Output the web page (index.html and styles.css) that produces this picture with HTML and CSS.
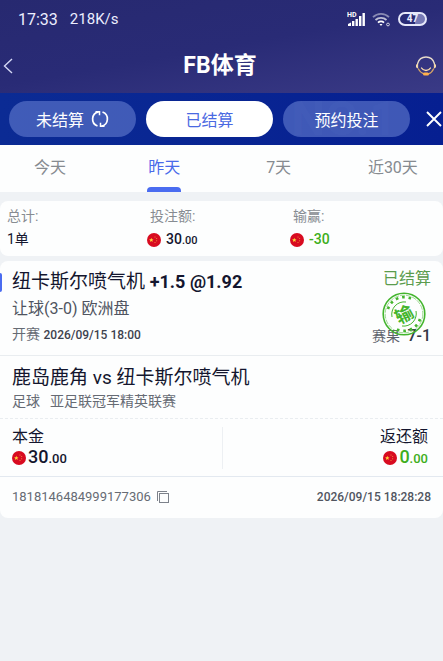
FILE: index.html
```html
<!DOCTYPE html>
<html lang="zh-CN">
<head>
    <meta charset="UTF-8">
    <meta name="viewport" content="width=device-width, initial-scale=1">
    <title>FB体育</title>
    <link rel="stylesheet" href="styles.css">
</head>
<body>
    <svg class="sprite" aria-hidden="true">
        <symbol id="flag" viewBox="0 0 14 14">
            <circle cx="7" cy="7" r="7" fill="#d80b20"/>
            <path d="M4.3 4.8l.6 1.5 1.6.1-1.2 1 .4 1.6-1.4-.9-1.4.9.4-1.6-1.2-1 1.6-.1z" fill="#ffd43b"/>
            <g fill="#f5a742">
                <circle cx="8" cy="3.9" r=".5"/>
                <circle cx="9.7" cy="5.5" r=".5"/>
                <circle cx="9.7" cy="7.8" r=".5"/>
                <circle cx="8" cy="9.6" r=".5"/>
            </g>
        </symbol>
    </svg>

    <header class="top">
        <div class="status">
            <span>17:33</span>
            <span class="speed">218K/s</span>
            <svg class="signal" width="20" height="16" viewBox="0 0 20 16">
                <text x="0" y="6" class="hd">HD</text>
                <g fill="#fff">
                    <path d="M1 15v-2l3-1.5V15z"/>
                    <rect x="5" y="10" width="2.4" height="5"/>
                    <rect x="8.5" y="8" width="2.4" height="7"/>
                    <rect x="12" y="5" width="2.4" height="10"/>
                    <rect x="15.5" y="2" width="2.4" height="13"/>
                </g>
            </svg>
            <svg class="wifi" width="19" height="15" viewBox="0 0 19 15" fill="none" stroke="#fff" stroke-width="1.8">
                <path d="M1 5.2a11.4 11.4 0 0 1 16 0" opacity=".45"/>
                <path d="M3.5 8a8 8 0 0 1 11 0" opacity=".7"/>
                <path d="M6 10.6a4.4 4.4 0 0 1 6 0"/>
                <path d="M7.5 12l1.5 2 1.5-2z" fill="#fff" stroke="none"/>
                <circle cx="16" cy="12.5" r="1.4" stroke-width="1" opacity=".75"/>
            </svg>
            <span class="battery">47</span>
        </div>
        <div class="title-bar">
            <button class="icon-btn" aria-label="返回">
                <svg width="10" height="16" viewBox="0 0 10 16" fill="none" stroke="#d5d8f5" stroke-width="1.4"><path d="M9 1L1.5 8 9 15"/></svg>
            </button>
            <h1>FB体育</h1>
            <button class="icon-btn" aria-label="客服">
                <svg width="22" height="20" viewBox="0 0 22 20" fill="none" stroke-linecap="round">
                    <path d="M2.6 7.5C3.7 3.6 7 1 11 1s7.3 2.6 8.4 6.5" stroke="#e8dccb" stroke-width="1.3"/>
                    <path d="M2.3 8c-1.2.8-1.2 3.2 0 4zM19.7 8c1.2.8 1.2 3.2 0 4z" fill="#ffe3ae" stroke="#ffe3ae"/>
                    <path d="M3.5 13c1.3 2.7 3.6 4.5 6.5 5M18.5 13c-1 2.4-2.5 4-5 4.8" stroke="#d5a366" stroke-width="1.3"/>
                    <path d="M6.5 12c2 3.3 7 3.3 9 0" stroke="#ffe0ad" stroke-width="1.3"/>
                    <path d="M9.5 18h3" stroke="#ffb04c" stroke-width="3"/>
                </svg>
            </button>
        </div>
    </header>

    <nav class="filters">
        <span class="watermark" aria-hidden="true">NO.1</span>
        <button class="pill">未结算
            <svg width="18" height="18" viewBox="0 0 18 18" fill="none" stroke="#fff" stroke-width="1.7">
                <path d="M6.5 16A7.4 7.4 0 0 1 7.5 1.8M11.5 2A7.4 7.4 0 0 1 10.5 16.2"/>
                <path d="M4.5 1.8h4v3.4M13.5 16.2h-4v-3.4" stroke-width="1.5"/>
            </svg>
        </button>
        <button class="pill active">已结算</button>
        <button class="pill">预约投注</button>
        <button class="close" aria-label="关闭">
            <svg width="16" height="16" viewBox="0 0 16 16" stroke="#fff" stroke-width="1.9"><path d="M1 1l14 14M15 1L1 15"/></svg>
        </button>
    </nav>

    <nav class="tabs">
        <button>今天</button>
        <button class="active">昨天</button>
        <button>7天</button>
        <button>近30天</button>
    </nav>

    <main>
        <section class="card summary">
            <div>
                <div class="label">总计:</div>
                <div class="value">1单</div>
            </div>
            <div>
                <div class="label">投注额:</div>
                <div class="value money"><svg class="flag"><use href="#flag"/></svg><span>30<small>.00</small></span></div>
            </div>
            <div>
                <div class="label">输赢:</div>
                <div class="value money green"><svg class="flag"><use href="#flag"/></svg><span>-30</span></div>
            </div>
        </section>

        <section class="card bet">
            <div class="pick">
                <h2>纽卡斯尔喷气机 <b>+1.5 @1.92</b></h2>
                <p class="market">让球(3-0) 欧洲盘</p>
                <p class="kickoff">开赛 <time>2026/09/15 18:00</time></p>
                <div class="result">
                    <span class="settled">已结算</span>
                    <span class="score">赛果 <b>7-1</b></span>
                </div>
                <svg class="stamp" width="44" height="44" viewBox="0 0 44 44" fill="none" stroke="#43b52d">
                    <circle cx="22" cy="22" r="20.8" stroke-width="1.6"/>
                    <circle cx="22" cy="22" r="18.8" stroke-width=".5" stroke-dasharray="5 1"/>
                    <path d="M6 17a17 17 0 0 1 24-10M38 27a17 17 0 0 1-24 10" stroke-width="2.6" stroke-dasharray="2.6 3.8"/>
                    <path d="M10 25a12.500 12.500 0 0 1 14-15M34 19a12.500 12.500 0 0 1-14 15" stroke-width="1"/>
                    <text x="22" y="29" transform="rotate(-28 22 22)">输</text>
                </svg>
            </div>

            <div class="match">
                <h2>鹿岛鹿角 vs 纽卡斯尔喷气机</h2>
                <p><span>足球</span><span>亚足联冠军精英联赛</span></p>
            </div>

            <div class="amounts">
                <div>
                    <div class="name">本金</div>
                    <div class="sum"><svg class="flag"><use href="#flag"/></svg><span>30<small>.00</small></span></div>
                </div>
                <div class="payout">
                    <div class="name">返还额</div>
                    <div class="sum green"><svg class="flag"><use href="#flag"/></svg><span>0<small>.00</small></span></div>
                </div>
            </div>

            <div class="order">
                <span>1818146484999177306</span>
                <button class="copy" aria-label="复制">
                    <svg width="12" height="12" viewBox="0 0 12 12" fill="none" stroke="#7d828b"><path d="M.5 10V.5H10"/><rect x="2.5" y="2.5" width="9" height="9"/></svg>
                </button>
                <time>2026/09/15 18:28:28</time>
            </div>
        </section>
    </main>
</body>
</html>
```

FILE: styles.css
```css
* {
    box-sizing: border-box;
}
body {
    margin: 0;
    min-height: 100vh;
    background-color: #eff2f5;
    color: #14162e;
    font-family: Roboto, "Noto Sans CJK SC", sans-serif;
    font-size: 14px;
    overflow-x: hidden;
}
h1, h2, p {
    margin: 0;
    font-weight: 400;
}
button {
    border: none;
    padding: 0;
    background: none;
    color: inherit;
    font: inherit;
    cursor: pointer;
}
svg {
    display: block;
    flex: none;
}
.sprite {
    display: none;
}
.green {
    color: #3eae20;
}

/* header */
.top {
    background: linear-gradient(170deg, #272970 0%, #292b76 50%, #3a3a86 100%);
    color: #fff;
}
.status {
    display: flex;
    align-items: center;
    height: 38px;
    padding: 0 16px 0 18px;
    font-size: 16px;
    color: #eceeff;
}
.speed {
    margin-left: 12px;
    font-size: 15px;
}
.signal {
    margin-left: auto;
}
.hd {
    font-size: 7px;
    font-weight: 700;
    fill: #fff;
}
.wifi {
    margin: 0 7px 0 5px;
}
.battery {
    width: 29px;
    height: 14px;
    border: 2px solid #e6e8fa;
    border-radius: 7px;
    background: linear-gradient(90deg, #292b76 60%, #777ab5 60%);
    font-size: 10px;
    font-weight: 700;
    line-height: 10px;
    text-align: center;
}
.title-bar {
    display: grid;
    grid-template-columns: 1fr auto 1fr;
    align-items: center;
    height: 55px;
    padding: 0 6px 0 3px;
}
.title-bar h1 {
    font-size: 23px;
    font-weight: 700;
    line-height: 30px;
}
.icon-btn:last-child {
    justify-self: end;
}

/* settled / unsettled */
.filters {
    position: relative;
    display: flex;
    align-items: center;
    gap: 10px;
    height: 52px;
    padding-left: 9px;
    background: linear-gradient(90deg, #0b2b94, #061f91);
    color: #fff;
}
.watermark {
    position: absolute;
    right: 46px;
    top: 0;
    font-size: 48px;
    font-weight: 700;
    line-height: 52px;
    color: rgba(255, 255, 255, 0.05);
}
.pill {
    position: relative;
    display: flex;
    flex: 1;
    align-items: center;
    justify-content: center;
    gap: 7px;
    height: 36px;
    border-radius: 18px;
    background-color: rgba(93, 118, 203, 0.65);
    font-size: 16px;
}
.pill.active {
    background-color: #fff;
    color: #4a69e2;
}
.close {
    width: 23px;
    padding-left: 6px;
}

/* days */
.tabs {
    display: grid;
    grid-template-columns: repeat(4, 1fr);
    margin: 0 -7px;
    background-color: #fdfefe;
}
.tabs button {
    display: flex;
    flex-direction: column;
    align-items: center;
    justify-content: space-between;
    height: 47px;
    padding-top: 11px;
    color: #868b90;
    font-size: 16px;
    line-height: 24px;
}
.tabs button.active {
    color: #4a6bea;
}
.tabs button.active::after {
    content: "";
    width: 34px;
    height: 5px;
    border-radius: 4px 4px 0 0;
    background-color: #4a6cf0;
}

/* cards */
main {
    display: grid;
    gap: 5px;
    padding-top: 9px;
}
.card {
    position: relative;
    border-radius: 8px;
    background-color: #fdfefe;
}
.flag {
    width: 14px;
    height: 14px;
}
.summary {
    display: grid;
    grid-template-columns: repeat(3, 1fr);
    padding: 4px 7px;
}
.summary .label {
    color: #878c92;
    line-height: 23px;
}
.summary .value {
    line-height: 23px;
}
.summary .money {
    display: flex;
    align-items: center;
    gap: 5px;
    margin-left: -3px;
    font-weight: 500;
}
.summary small {
    font-size: 11px;
}

.pick {
    display: flow-root;
    position: relative;
    padding: 7px 12px;
    border-bottom: 1px solid #e9edf0;
}
.pick::before {
    content: "";
    position: absolute;
    left: 0;
    top: 12px;
    width: 2px;
    height: 19px;
    border-radius: 0 2px 2px 0;
    background-color: #4a6cf0;
}
.pick h2, .match h2 {
    font-size: 19px;
    line-height: 28px;
}
.pick h2 b {
    font-size: 18px;
}
.market {
    color: #4f5460;
    font-size: 16px;
    line-height: 26px;
}
.kickoff {
    color: #666b74;
    line-height: 25px;
}
.kickoff time {
    color: #3d424e;
    font-size: 12px;
    font-weight: 500;
}
.result {
    position: absolute;
    right: 12px;
    top: 6px;
    bottom: 7px;
    display: flex;
    flex-direction: column;
    justify-content: space-between;
    align-items: flex-end;
    line-height: 24px;
}
.settled {
    color: #5b9c4d;
    font-size: 16px;
}
.score {
    color: #5f646d;
}
.score b {
    margin-left: 4px;
    color: #333744;
    font-size: 16px;
    font-weight: 500;
}
.stamp {
    position: absolute;
    right: 17px;
    top: 31px;
}
.stamp text {
    fill: #43b52d;
    stroke: none;
    font-size: 18px;
    font-weight: 700;
    text-anchor: middle;
}

.match {
    padding: 8px 12px 7px;
    border-bottom: 1px dashed #e9edf0;
}
.match p {
    display: flex;
    gap: 10px;
    color: #666b74;
    line-height: 19px;
}

.amounts {
    display: grid;
    grid-template-columns: 1fr 1fr;
    padding: 8px 0 7px;
    border-bottom: 1px solid #e3e9f0;
}
.amounts > div {
    padding: 0 12px;
}
.amounts .payout {
    padding-right: 15px;
    border-left: 1px solid #edf0f3;
    text-align: right;
}
.name {
    font-size: 16px;
    line-height: 20px;
}
.sum {
    display: flex;
    align-items: center;
    gap: 2px;
    font-size: 18px;
    font-weight: 500;
    line-height: 20px;
}
.payout .sum {
    justify-content: flex-end;
}
.sum small {
    font-size: 13px;
}

.order {
    display: flex;
    align-items: center;
    height: 41px;
    padding: 0 12px 2px;
    color: #666b74;
    font-size: 13px;
}
.copy {
    margin: 0 auto 0 6px;
}
.order time {
    color: #50555f;
    font-size: 12px;
    font-weight: 500;
}
```
